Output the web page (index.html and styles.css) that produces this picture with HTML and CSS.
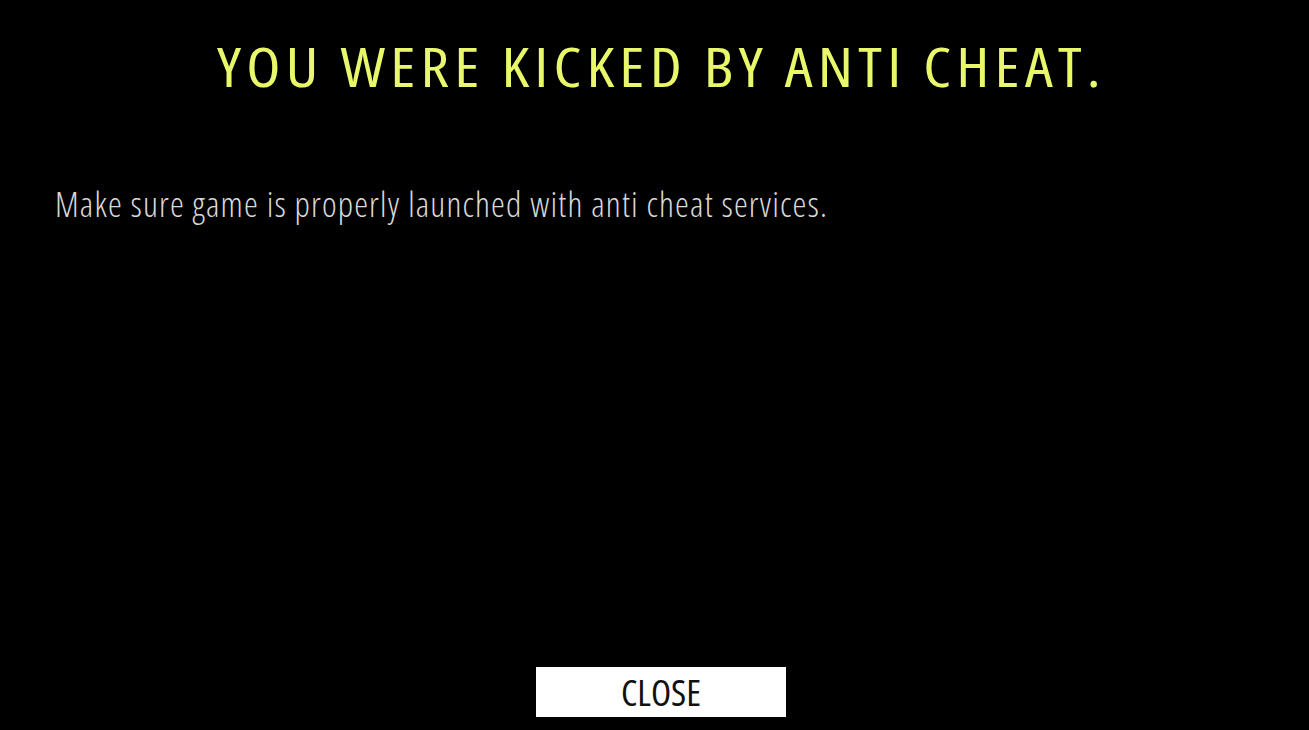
FILE: index.html
```html
<!DOCTYPE html>
<html lang="en">
<head>
<meta charset="utf-8">
<title>Kicked</title>
<link rel="stylesheet" href="styles.css">
</head>
<body>
<main class="screen">
  <h1 class="title"><span class="title-text">YOU WERE KICKED BY ANTI CHEAT.</span></h1>
  <p class="message">Make sure game is properly launched with anti cheat services.</p>
  <div class="actions">
    <button class="close-btn" type="button">CLOSE</button>
  </div>
</main>
</body>
</html>
```
FILE: styles.css
```css
html, body {
  margin: 0;
  padding: 0;
  background: #000;
  height: 100%;
}
.screen {
  box-sizing: border-box;
  height: 730px;
  display: flex;
  flex-direction: column;
  padding: 36px 0 13px 55px;
}
.title {
  margin: 0;
  text-align: center;
  padding-right: 42px;
  font-family: "Open Sans", sans-serif;
  font-weight: 400;
  font-stretch: condensed;
  font-size: 54px;
  color: #e9f86a;
  line-height: 60px;
}
.title-text {
  display: inline-block;
  letter-spacing: 4.5px;
  transform: scaleX(1.162);
  transform-origin: center;
}
.message {
  margin: 88px 0 0 0;
  font-family: "Open Sans", sans-serif;
  font-weight: 300;
  font-stretch: condensed;
  font-size: 35px;
  letter-spacing: 1.15px;
  line-height: 40px;
  color: #d8d8d8;
}
.actions {
  margin-top: auto;
  display: flex;
  justify-content: center;
  padding-right: 42px;
}
.close-btn {
  width: 250px;
  height: 50px;
  border: none;
  background: #fff;
  color: #111;
  font-family: "Open Sans", sans-serif;
  font-weight: 400;
  font-stretch: condensed;
  font-size: 37px;
  line-height: 50px;
  padding: 0;
}
```
